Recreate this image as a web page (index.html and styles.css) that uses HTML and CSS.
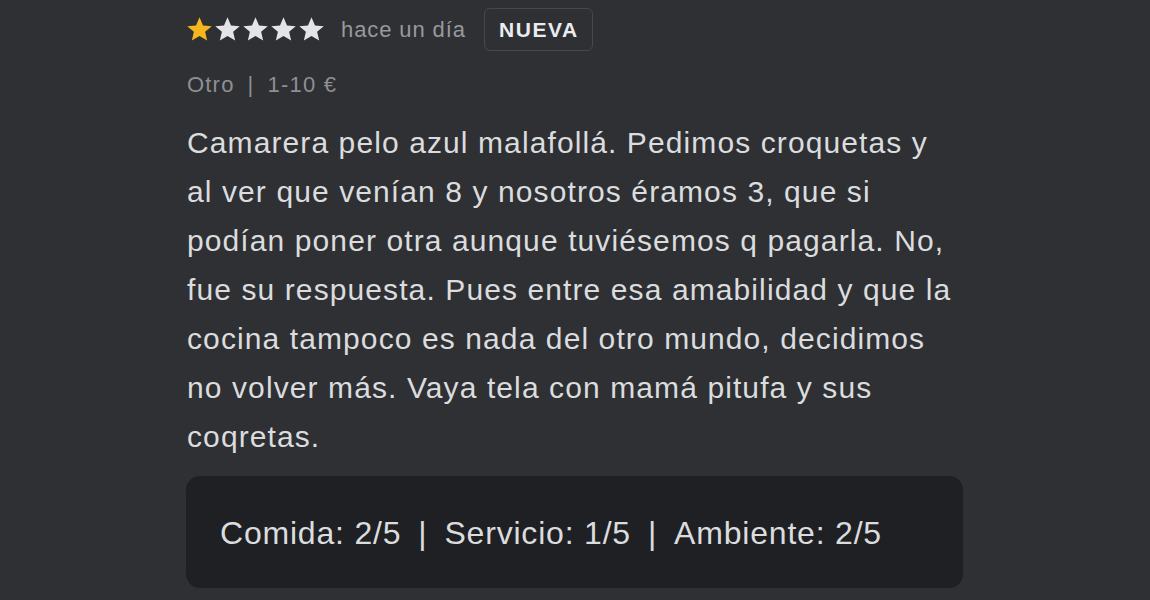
FILE: index.html
```html
<!DOCTYPE html>
<html lang="es">
<head>
<meta charset="utf-8">
<title>Reseña</title>
<link rel="stylesheet" href="styles.css">
</head>
<body>
<article class="review">
  <header class="review-head">
    <div class="stars">
      <svg class="star star-on" viewBox="0 0 24 24"><path d="M12 1.2l3.1 7.2 7.8.6-5.9 5.1 1.8 7.7L12 17.7l-6.8 4.1 1.8-7.7L1.1 9l7.8-.6z"/></svg>
      <svg class="star" viewBox="0 0 24 24"><path d="M12 1.2l3.1 7.2 7.8.6-5.9 5.1 1.8 7.7L12 17.7l-6.8 4.1 1.8-7.7L1.1 9l7.8-.6z"/></svg>
      <svg class="star" viewBox="0 0 24 24"><path d="M12 1.2l3.1 7.2 7.8.6-5.9 5.1 1.8 7.7L12 17.7l-6.8 4.1 1.8-7.7L1.1 9l7.8-.6z"/></svg>
      <svg class="star" viewBox="0 0 24 24"><path d="M12 1.2l3.1 7.2 7.8.6-5.9 5.1 1.8 7.7L12 17.7l-6.8 4.1 1.8-7.7L1.1 9l7.8-.6z"/></svg>
      <svg class="star" viewBox="0 0 24 24"><path d="M12 1.2l3.1 7.2 7.8.6-5.9 5.1 1.8 7.7L12 17.7l-6.8 4.1 1.8-7.7L1.1 9l7.8-.6z"/></svg>
    </div>
    <span class="when">hace un día</span>
    <span class="badge">NUEVA</span>
  </header>
  <div class="meta"><span>Otro</span><span class="sep">|</span><span>1-10 €</span></div>
  <p class="text">Camarera pelo azul malafollá. Pedimos croquetas y<br>al ver que venían 8 y nosotros éramos 3, que si<br>podían poner otra aunque tuviésemos q pagarla. No,<br>fue su respuesta. Pues entre esa amabilidad y que la<br>cocina tampoco es nada del otro mundo, decidimos<br>no volver más. Vaya tela con mamá pitufa y sus<br>coqretas.</p>
  <div class="scores">
    <span>Comida: 2/5</span><span class="sep">|</span><span>Servicio: 1/5</span><span class="sep">|</span><span>Ambiente: 2/5</span>
  </div>
</article>
</body>
</html>
```

FILE: styles.css
```css
html, body {
  margin: 0;
  background: #2f3034;
}
body {
  font-family: "Liberation Sans", Arial, sans-serif;
  padding-top: 8px;
}
.review {
  margin-left: 186px;
  width: 777px;
}
.review-head {
  display: flex;
  align-items: center;
  height: 43px;
}
.stars {
  display: flex;
  gap: 1px;
}
.star {
  width: 27px;
  height: 27px;
  fill: #e4e4e6;
}
.star-on {
  fill: #f4b51f;
}
.when {
  margin-left: 16px;
  font-size: 22px;
  letter-spacing: 0.9px;
  color: #97999d;
}
.badge {
  margin-left: 18px;
  box-sizing: border-box;
  height: 43px;
  padding: 0 13px 0 14px;
  display: flex;
  align-items: center;
  border: 1px solid #47484c;
  border-radius: 6px;
  font-size: 21px;
  font-weight: bold;
  letter-spacing: 1.6px;
  color: #ececee;
}
.meta {
  margin-top: 20px;
  padding-left: 1px;
  display: flex;
  align-items: center;
  height: 28px;
  font-size: 22px;
  letter-spacing: 1.2px;
  color: #8d8f94;
}
.meta .sep {
  margin: 0 13px;
}
.text {
  margin: 19px 0 0 1px;
  font-size: 30px;
  line-height: 49px;
  letter-spacing: 1.1px;
  color: #dbdcde;
}
.scores {
  margin-top: 15px;
  box-sizing: border-box;
  height: 112px;
  padding: 3px 0 0 34px;
  display: flex;
  align-items: center;
  background: #1f2023;
  border-radius: 14px;
  font-size: 32px;
  letter-spacing: 0.8px;
  color: #dbdcde;
}
.scores .sep {
  margin: 0 17px;
}
```
